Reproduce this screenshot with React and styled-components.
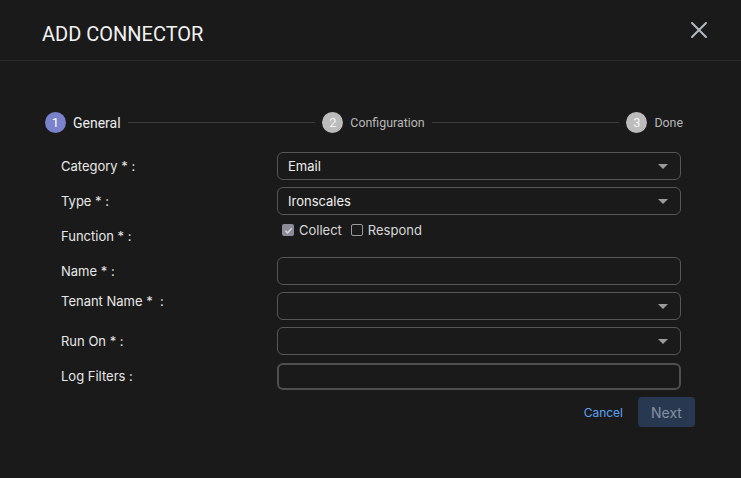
import React from "react";
import styled, { createGlobalStyle } from "styled-components";

const GlobalStyle = createGlobalStyle`
  html, body {
    margin: 0;
    padding: 0;
    background: #1a1a1a;
  }
  * { box-sizing: border-box; }
`;

const StyledDialog = styled.div`
  width: 741px;
  height: 478px;
  background: #1a1a1a;
  color: #e6e6e6;
  font-family: Inter, "Liberation Sans", sans-serif;
`;

const StyledHeader = styled.header`
  height: 61px;
  display: flex;
  align-items: flex-start;
  justify-content: space-between;
  padding: 23px 33px 0 42px;
  border-bottom: 1px solid #2d2d2d;
`;

const StyledTitle = styled.h2`
  margin: 0;
  font-family: Roboto, "Liberation Sans", sans-serif;
  font-weight: 400;
  font-size: 20px;
  line-height: 23px;
  color: #f2f2f2;
`;

const StyledCloseBtn = styled.button`
  background: none;
  border: none;
  padding: 0;
  margin-top: -2px;
  cursor: pointer;
  display: flex;
`;

const StyledStepper = styled.div`
  display: flex;
  align-items: center;
  margin: 51px 58px 0 45px;
  font-family: Roboto, "Liberation Sans", sans-serif;
`;

const StyledStep = styled.div`
  display: flex;
  align-items: center;
  gap: 7px;
`;

const StyledStepCircle = styled.span`
  width: 21px;
  height: 21px;
  border-radius: 50%;
  background: ${(p) => (p.$active ? "#7a82cb" : "#bcbcbc")};
  color: ${(p) => (p.$active ? "#ffffff" : "#f2f2f2")};
  font-size: 13px;
  display: flex;
  align-items: center;
  justify-content: center;
`;

const StyledStepLabel = styled.span`
  font-size: ${(p) => (p.$active ? "14px" : "12.4px")};
  color: ${(p) => (p.$active ? "#ececec" : "#b8b8b8")};
`;

const StyledStepLine = styled.span`
  flex: 1;
  height: 1px;
  background: #3c3c3c;
  margin: 0 7px;
`;

const StyledForm = styled.form`
  width: 634px;
  margin: 19px 0 0 61px;
  display: flex;
  flex-direction: column;
  gap: 7px;
`;

const StyledRow = styled.div`
  display: grid;
  grid-template-columns: 216px 404px;
  align-items: center;
  min-height: 28px;
`;

const StyledLabel = styled.label`
  font-size: 13px;
  color: #e8e8e8;
  align-self: ${(p) => p.$align || "center"};
  padding-top: ${(p) => p.$offset || 0}px;
`;

const StyledField = styled.div`
  position: relative;
  height: ${(p) => p.$height || 28}px;
  border: ${(p) => (p.$thick ? "2px solid #4f4f4f" : "1px solid #575757")};
  border-radius: 6px;
  display: flex;
  align-items: center;
  padding: 0 10px;
  font-size: 13px;
  color: #f0f0f0;
`;

const StyledArrow = styled.span`
  position: absolute;
  right: 12px;
  top: 50%;
  margin-top: -2px;
  width: 0;
  height: 0;
  border-left: 5px solid transparent;
  border-right: 5px solid transparent;
  border-top: 5px solid #9b9b9b;
`;

const StyledChecks = styled.div`
  align-self: start;
  display: flex;
  align-items: center;
  gap: 9px;
  padding-left: 5px;
  font-size: 13px;
  color: #d8d8d8;
`;

const StyledCheck = styled.span`
  display: flex;
  align-items: center;
  gap: 5px;
`;

const StyledBox = styled.span`
  width: 12px;
  height: 12px;
  border-radius: 2px;
  border: ${(p) => (p.$checked ? "none" : "1.5px solid #9a9a9a")};
  background: ${(p) => (p.$checked ? "#8c8c98" : "transparent")};
  display: flex;
  align-items: center;
  justify-content: center;
`;

const StyledActions = styled.div`
  display: flex;
  justify-content: flex-end;
  align-items: center;
  gap: 15px;
`;

const StyledCancel = styled.button`
  background: none;
  border: none;
  padding: 0;
  font-family: Inter, "Liberation Sans", sans-serif;
  font-size: 12px;
  color: #5da2f2;
  cursor: pointer;
`;

const StyledNext = styled.button`
  width: 57px;
  height: 30px;
  border: none;
  border-radius: 4px;
  background: #283850;
  color: #8590a0;
  font-family: Inter, "Liberation Sans", sans-serif;
  font-size: 14px;
`;

const steps = [
  { n: 1, label: "General", active: true },
  { n: 2, label: "Configuration" },
  { n: 3, label: "Done" },
];

function Select({ value }) {
  return (
    <StyledField>
      {value}
      <StyledArrow />
    </StyledField>
  );
}

export default function App() {
  return (
    <StyledDialog>
      <GlobalStyle />
      <StyledHeader>
        <StyledTitle>ADD CONNECTOR</StyledTitle>
        <StyledCloseBtn type="button" aria-label="close">
          <svg width="18" height="18" viewBox="0 0 18 18">
            <path d="M2 2 L16 16 M16 2 L2 16" stroke="#b3bac2" strokeWidth="2" strokeLinecap="round" />
          </svg>
        </StyledCloseBtn>
      </StyledHeader>

      <StyledStepper>
        {steps.map((s, i) => (
          <React.Fragment key={s.n}>
            {i > 0 && <StyledStepLine />}
            <StyledStep>
              <StyledStepCircle $active={s.active}>{s.n}</StyledStepCircle>
              <StyledStepLabel $active={s.active}>{s.label}</StyledStepLabel>
            </StyledStep>
          </React.Fragment>
        ))}
      </StyledStepper>

      <StyledForm>
        <StyledRow>
          <StyledLabel>Category * :</StyledLabel>
          <Select value="Email" />
        </StyledRow>
        <StyledRow>
          <StyledLabel>Type * :</StyledLabel>
          <Select value="Ironscales" />
        </StyledRow>
        <StyledRow>
          <StyledLabel>Function * :</StyledLabel>
          <StyledChecks>
            <StyledCheck>
              <StyledBox $checked>
                <svg width="9" height="9" viewBox="0 0 10 10">
                  <path d="M1.5 5.2 L4 7.6 L8.6 2.4" stroke="#d4d4dc" strokeWidth="1.6" fill="none" />
                </svg>
              </StyledBox>
              Collect
            </StyledCheck>
            <StyledCheck>
              <StyledBox />
              Respond
            </StyledCheck>
          </StyledChecks>
        </StyledRow>
        <StyledRow>
          <StyledLabel>Name * :</StyledLabel>
          <StyledField />
        </StyledRow>
        <StyledRow>
          <StyledLabel $align="start" $offset={1}>Tenant Name *&nbsp; :</StyledLabel>
          <Select value="" />
        </StyledRow>
        <StyledRow>
          <StyledLabel>Run On * :</StyledLabel>
          <Select value="" />
        </StyledRow>
        <StyledRow>
          <StyledLabel>Log Filters :</StyledLabel>
          <StyledField $height={27} $thick />
        </StyledRow>
        <StyledActions>
          <StyledCancel type="button">Cancel</StyledCancel>
          <StyledNext type="button">Next</StyledNext>
        </StyledActions>
      </StyledForm>
    </StyledDialog>
  );
}
